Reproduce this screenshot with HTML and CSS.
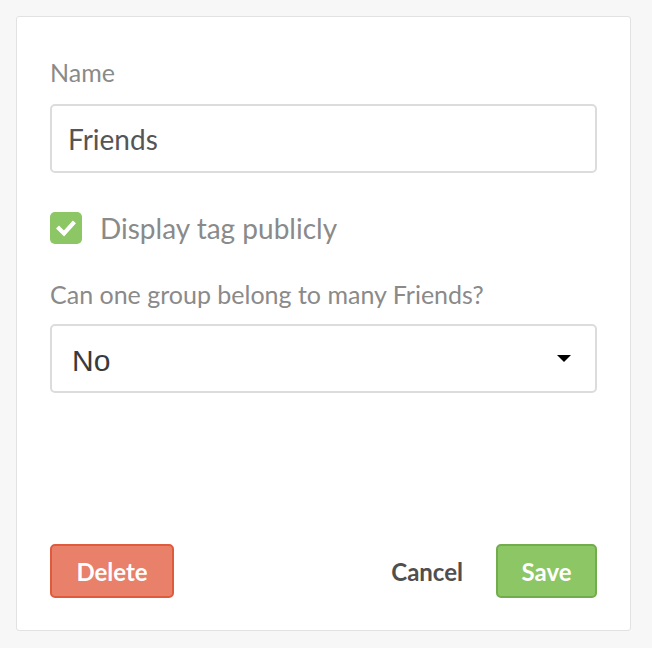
FILE: index.html
```html
<!DOCTYPE html>
<html>
<head>
<meta charset="utf-8">
<link rel="stylesheet" href="styles.css">
</head>
<body>
<div class="card">
  <div class="field">
    <div class="label">Name</div>
    <div class="input">Friends</div>
  </div>
  <div class="check-row">
    <span class="checkbox">
      <svg width="32" height="32" viewBox="0 0 32 32"><path d="M9 16.5 L14 21.5 L23 11.5" fill="none" stroke="#fff" stroke-width="4.2" stroke-linecap="square" stroke-linejoin="miter"/></svg>
    </span>
    <span class="check-label">Display tag publicly</span>
  </div>
  <div class="field">
    <div class="label label-q">Can one group belong to many Friends?</div>
    <div class="select"><span class="select-text">No</span><span class="caret"></span></div>
  </div>
  <div class="footer">
    <button class="btn btn-delete">Delete</button>
    <div class="right">
      <button class="btn btn-cancel">Cancel</button>
      <button class="btn btn-save">Save</button>
    </div>
  </div>
</div>
</body>
</html>
```
FILE: styles.css
```css
html, body { margin: 0; padding: 0; }
body {
  background: #f7f7f7;
  padding: 16px;
  font-family: Lato, "Open Sans", sans-serif;
}
.card {
  box-sizing: border-box;
  width: 615px;
  height: 615px;
  background: #fff;
  border: 1px solid #e2e2e2;
  border-radius: 3px;
  padding: 40px 33px 32px 33px;
  display: flex;
  flex-direction: column;
}
.label {
  font-size: 25px;
  line-height: 30px;
  color: #8a8a8a;
  margin-bottom: 17px;
}
.label-q { margin-bottom: 15px; }
.input, .select {
  box-sizing: border-box;
  height: 69px;
  border: 2px solid #dcdcdc;
  border-radius: 5px;
  display: flex;
  align-items: center;
  padding: 0 16px;
  font-size: 28px;
  color: #555;
}
.select {
  padding: 0 24px 0 20px;
  justify-content: space-between;
  color: #3a3a3a;
  font-size: 30px;
  font-family: "Liberation Sans", Arial, sans-serif;
}
.select-text { padding-top: 5px; }
.caret {
  width: 0; height: 0;
  border-left: 7px solid transparent;
  border-right: 7px solid transparent;
  border-top: 7px solid #000;
}
.check-row {
  display: flex;
  align-items: center;
  margin-top: 39px;
  margin-bottom: 35px;
  height: 32px;
}
.checkbox {
  width: 32px; height: 32px;
  border-radius: 5px;
  background: #8cc665;
  display: block;
}
.checkbox svg { display: block; }
.check-label {
  margin-left: 18px;
  font-size: 28px;
  color: #8a8a8a;
}
.footer {
  margin-top: auto;
  display: flex;
  justify-content: space-between;
  align-items: center;
}
.right { display: flex; align-items: center; gap: 33px; }
.btn {
  font-family: Lato, sans-serif;
  font-weight: bold;
  font-size: 24px;
  height: 54px;
  border-radius: 5px;
  cursor: pointer;
  padding: 0;
}
.btn-delete {
  width: 124px;
  background: #e8806a;
  border: 2px solid #e05a3e;
  color: #fff;
}
.btn-cancel {
  background: none;
  border: none;
  color: #4f4f4f;
}
.btn-save {
  width: 101px;
  background: #8cc665;
  border: 2px solid #72ad4d;
  color: #fff;
}
```
